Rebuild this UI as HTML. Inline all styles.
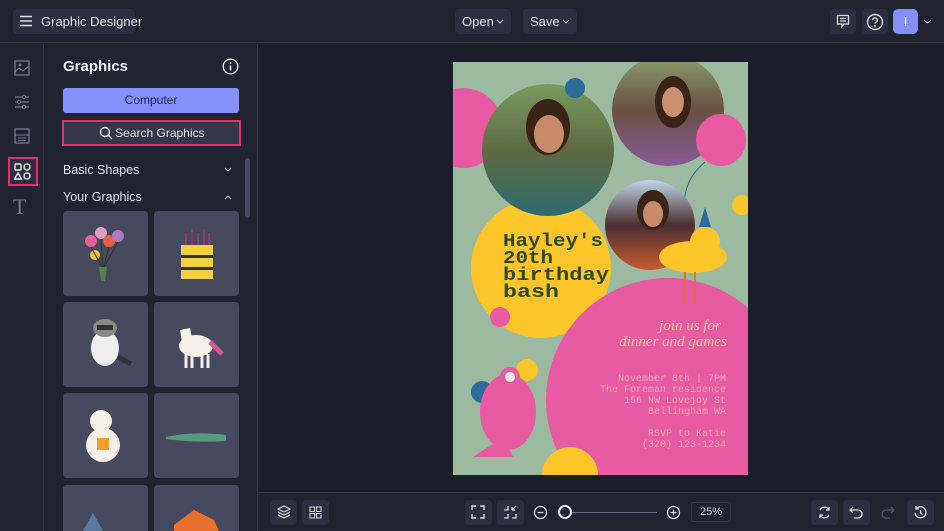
<!DOCTYPE html>
<html style="width:944px;height:531px;overflow:hidden"><head><style>
*{box-sizing:border-box;margin:0;padding:0}
body{width:944px;height:531px;background:#1b1d28;font-family:"Liberation Sans",sans-serif;color:#e4e5ec;position:relative;overflow:hidden;font-size:13px}
.abs{position:absolute}
.btn{position:absolute;background:#2c2f3e;border-radius:4px}
.tile{position:absolute;width:85px;height:85px;background:#474a5e;border-radius:4px}
svg{position:absolute}
</style></head><body>
<div class="abs" style="left:0;top:0;width:944px;height:43px;background:#21232f;border-bottom:1px solid #363848"></div>
<div class="btn" style="left:13px;top:9px;width:122px;height:25px"></div>
<svg style="left:19px;top:15px" width="14" height="12"><path d="M1 1.5H13M1 6H13M1 10.5H13" stroke="#dfe0e8" stroke-width="1.5"/></svg>
<div class="abs" style="left:41px;top:14px;font-size:13px">Graphic Designer</div>
<div class="btn" style="left:455px;top:9px;width:56px;height:25px"></div>
<div class="abs" style="left:462px;top:14px">Open</div>
<svg style="left:496px;top:19px" width="8" height="6"><path d="M1 1L4 4L7 1" stroke="#ccc" fill="none"/></svg>
<div class="btn" style="left:523px;top:9px;width:54px;height:25px"></div>
<div class="abs" style="left:530px;top:14px">Save</div>
<svg style="left:562px;top:19px" width="8" height="6"><path d="M1 1L4 4L7 1" stroke="#ccc" fill="none"/></svg>
<div class="btn" style="left:830px;top:9px;width:26px;height:25px"></div>
<svg style="left:836px;top:14px" width="14" height="15"><path d="M1.5 1.5H12.5V10H8L6 12.5V10H1.5Z M4 4.5H10M4 7H10" stroke="#ddd" fill="none" stroke-width="1.3"/></svg>
<div class="btn" style="left:862px;top:9px;width:26px;height:25px"></div>
<svg style="left:866px;top:13px" width="18" height="18"><circle cx="9" cy="9" r="7.5" stroke="#ddd" fill="none" stroke-width="1.4"/><path d="M6.8 7.2A2.2 2.2 0 1 1 9.8 9.2C9.2 9.6 9 10 9 10.8" stroke="#ddd" fill="none" stroke-width="1.4"/><circle cx="9" cy="13" r=".9" fill="#ddd"/></svg>
<div class="abs" style="left:893px;top:9px;width:25px;height:25px;background:#8490fb;border-radius:5px;color:#fff;text-align:center;line-height:25px">I</div>
<svg style="left:923px;top:19px" width="9" height="6"><path d="M1 1L4.5 4L8 1" stroke="#ccc" fill="none"/></svg>

<div class="abs" style="left:0;top:44px;width:44px;height:487px;background:#21232f;border-right:1px solid #363848"></div>
<svg style="left:14px;top:60px" width="16" height="16"><rect x="1" y="1" width="14" height="14" stroke="#777a8c" fill="none" stroke-width="1.3"/><path d="M1 12L5 8L9 11L15 6" stroke="#777a8c" fill="none"/><circle cx="6" cy="5" r="1.4" fill="#777a8c"/></svg>
<svg style="left:14px;top:94px" width="16" height="16"><path d="M1 3H15M1 8H15M1 13H15" stroke="#777a8c" stroke-width="1.2"/><circle cx="10" cy="3" r="1.7" fill="#21232f" stroke="#777a8c"/><circle cx="5" cy="8" r="1.7" fill="#21232f" stroke="#777a8c"/><circle cx="10" cy="13" r="1.7" fill="#21232f" stroke="#777a8c"/></svg>
<svg style="left:14px;top:128px" width="16" height="16"><rect x="1" y="1" width="14" height="14" stroke="#777a8c" fill="none" stroke-width="1.3"/><path d="M1 7H15M4 10H12M4 12.5H12" stroke="#777a8c"/></svg>
<div class="abs" style="left:8px;top:157px;width:30px;height:29px;border:2px solid #e0336b;background:#2c2f3e"></div>
<svg style="left:14px;top:163px" width="18" height="18"><rect x="1" y="1" width="6" height="6" rx="1" stroke="#eee" fill="none" stroke-width="1.4"/><circle cx="13" cy="4" r="3" stroke="#eee" fill="none" stroke-width="1.4"/><path d="M4 10L7.5 16H0.5Z" stroke="#eee" fill="none" stroke-width="1.4"/><circle cx="13" cy="13" r="3" stroke="#eee" fill="none" stroke-width="1.4"/></svg>
<div class="abs" style="left:13px;top:194px;font-family:'Liberation Serif',serif;font-size:22px;color:#777a8c">T</div>

<div class="abs" style="left:45px;top:44px;width:213px;height:487px;background:#21232f;border-right:1px solid #363848;overflow:hidden">
</div>
<div class="abs" style="left:63px;top:58px;font-size:15px;font-weight:bold;color:#f2f2f6">Graphics</div>
<svg style="left:222px;top:58px" width="17" height="17"><circle cx="8.5" cy="8.5" r="7.3" stroke="#eee" fill="none" stroke-width="1.3"/><path d="M8.5 7.5V12.5" stroke="#eee" stroke-width="1.5"/><circle cx="8.5" cy="5" r=".9" fill="#eee"/></svg>
<div class="abs" style="left:63px;top:88px;width:176px;height:25px;background:#8490fb;border-radius:3px;color:#1f2240;text-align:center;line-height:25px;font-size:12px">Computer</div>
<div class="abs" style="left:62px;top:120px;width:179px;height:26px;border:2px solid #e0336b;background:#343747;text-align:center;line-height:22px;font-size:12px;color:#e8e8ee">&nbsp;&nbsp;&nbsp;&nbsp;&nbsp;Search Graphics</div>
<svg style="left:99px;top:126px" width="14" height="14"><circle cx="6" cy="6" r="4.5" stroke="#eee" fill="none" stroke-width="1.4"/><path d="M9.3 9.3L13 13" stroke="#eee" stroke-width="1.4"/></svg>
<div class="abs" style="left:63px;top:163px;font-size:12.5px">Basic Shapes</div>
<svg style="left:224px;top:167px" width="8" height="6"><path d="M1 1L4 4L7 1" stroke="#ccc" fill="none"/></svg>
<div class="abs" style="left:63px;top:190px;font-size:12.5px">Your Graphics</div>
<svg style="left:224px;top:194px" width="8" height="6"><path d="M1 5L4 2L7 5" stroke="#ccc" fill="none"/></svg>
<div class="abs" style="left:245px;top:158px;width:5px;height:60px;background:#474a5e;border-radius:3px"></div>
<div class="tile" style="left:63px;top:211px"></div><div class="tile" style="left:154px;top:211px"></div>
<div class="tile" style="left:63px;top:302px"></div><div class="tile" style="left:154px;top:302px"></div>
<div class="tile" style="left:63px;top:393px"></div><div class="tile" style="left:154px;top:393px"></div>
<div class="tile" style="left:63px;top:485px;height:46px;border-radius:4px 4px 0 0"></div><div class="tile" style="left:154px;top:485px;height:46px;border-radius:4px 4px 0 0"></div>
<svg style="left:63px;top:211px" width="85" height="85"><circle cx="28" cy="30" r="6" fill="#e85ca0"/><circle cx="38" cy="22" r="6" fill="#d9a0b8"/><circle cx="46" cy="30" r="6" fill="#e8604a"/><circle cx="55" cy="25" r="6" fill="#b07ac0"/><circle cx="32" cy="44" r="5" fill="#f1c232"/><path d="M28 36L40 58M38 28L40 58M46 36L40 58M55 31L40 58" stroke="#333"/><path d="M36 56L44 56L42 70L38 70Z" fill="#5a7a4a"/></svg>
<svg style="left:154px;top:211px" width="85" height="85"><rect x="27" y="34" width="32" height="34" fill="#f4d03f"/><rect x="27" y="44" width="32" height="3" fill="#333"/><rect x="27" y="56" width="32" height="3" fill="#333"/><path d="M32 22V34M38 18V34M44 22V34M50 18V34M55 22V34" stroke="#c36"/></svg>
<svg style="left:63px;top:302px" width="85" height="85"><ellipse cx="42" cy="46" rx="14" ry="18" fill="#eee"/><ellipse cx="42" cy="26" rx="12" ry="9" fill="#888"/><rect x="34" y="23" width="16" height="5" fill="#333"/><path d="M55 55L68 62" stroke="#333" stroke-width="5"/></svg>
<svg style="left:154px;top:302px" width="85" height="85"><ellipse cx="42" cy="44" rx="17" ry="11" fill="#f5f0e8"/><path d="M28 40L26 28L36 26L38 36" fill="#f5f0e8"/><path d="M56 40L68 52" stroke="#e05090" stroke-width="5"/><path d="M32 52V66M38 52V66M48 52V66M54 52V66" stroke="#f5f0e8" stroke-width="3"/></svg>
<svg style="left:63px;top:393px" width="85" height="85"><ellipse cx="40" cy="52" rx="17" ry="17" fill="#f5f0e8"/><circle cx="38" cy="28" r="11" fill="#f5f0e8"/><rect x="34" y="45" width="12" height="12" fill="#f1a030"/></svg>
<svg style="left:154px;top:393px" width="85" height="85"><path d="M12 44Q40 38 72 42L72 48Q40 50 12 46Z" fill="#5a9a80"/></svg>
<svg style="left:154px;top:485px" width="85" height="46"><path d="M20 40L40 25L60 35L65 46L20 46Z" fill="#e8702a"/></svg>
<svg style="left:63px;top:485px" width="85" height="46"><path d="M20 46L30 28L40 46Z" fill="#5a7aa0"/></svg>

<svg style="left:453px;top:62px" width="295" height="413" viewBox="0 0 295 413">
<defs><clipPath id="c"><rect width="295" height="413"/></clipPath>
<linearGradient id="g1" x1="0" y1="0" x2="0" y2="1"><stop offset="0" stop-color="#7a9a60"/><stop offset=".5" stop-color="#5e6a40"/><stop offset="1" stop-color="#2e6a70"/></linearGradient>
<linearGradient id="g2" x1="0" y1="0" x2="0" y2="1"><stop offset="0" stop-color="#8aa070"/><stop offset=".5" stop-color="#6a5040"/><stop offset="1" stop-color="#8a5a9a"/></linearGradient>
<linearGradient id="g3" x1="0" y1="0" x2="0" y2="1"><stop offset="0" stop-color="#c0d4e8"/><stop offset=".5" stop-color="#4a3030"/><stop offset="1" stop-color="#c85a30"/></linearGradient></defs>
<g clip-path="url(#c)">
<rect width="295" height="413" fill="#9cbaa0"/>
<circle cx="88" cy="206" r="70" fill="#fcc52a"/>
<circle cx="215" cy="338" r="122" fill="#e85aa2"/>
<circle cx="10" cy="66" r="40" fill="#e85aa2"/>
<circle cx="95" cy="88" r="66" fill="url(#g1)"/>
<ellipse cx="95" cy="65" rx="22" ry="28" fill="#3a2418"/><ellipse cx="96" cy="72" rx="15" ry="19" fill="#c88a6a"/>
<circle cx="122" cy="26" r="10" fill="#2e6a9a"/>
<circle cx="215" cy="48" r="56" fill="url(#g2)"/>
<ellipse cx="220" cy="40" rx="18" ry="26" fill="#3a2418"/><ellipse cx="220" cy="40" rx="11" ry="15" fill="#c89070"/>
<ellipse cx="268" cy="78" rx="25" ry="26" fill="#e85aa2"/>
<path d="M252 100Q228 120 232 150" stroke="#2e6a9a" fill="none"/>
<circle cx="197" cy="163" r="45" fill="url(#g3)"/>
<ellipse cx="200" cy="148" rx="16" ry="20" fill="#3a2418"/><ellipse cx="200" cy="152" rx="10" ry="13" fill="#c88a6a"/>
<ellipse cx="240" cy="195" rx="34" ry="16" fill="#fcc52a"/><ellipse cx="252" cy="180" rx="15" ry="15" fill="#fcc52a"/><path d="M246 165L252 145L258 165Z" fill="#2e6a9a"/>
<path d="M232 210V242M242 210V242" stroke="#e8702a" stroke-width="2"/>
<circle cx="289" cy="143" r="10" fill="#fcc52a"/>
<circle cx="47" cy="255" r="10" fill="#e85aa2"/>
<circle cx="74" cy="308" r="11" fill="#fcc52a"/>
<circle cx="117" cy="413" r="28" fill="#fcc52a"/>
<circle cx="29" cy="330" r="11" fill="#2e6a9a"/>
<ellipse cx="55" cy="350" rx="28" ry="38" fill="#e85aa2"/><circle cx="57" cy="315" r="10" fill="#e85aa2"/><circle cx="57" cy="315" r="5" fill="#f5f0e8"/>
<path d="M20 395L50 375L60 395Z" fill="#e85aa2"/>
<g font-family="Liberation Mono,monospace" font-weight="bold" font-size="18" fill="#2e4a20">
<text x="50" y="184" textLength="100" lengthAdjust="spacingAndGlyphs">Hayley's</text>
<text x="50" y="201" textLength="50" lengthAdjust="spacingAndGlyphs">20th</text>
<text x="50" y="218" textLength="106" lengthAdjust="spacingAndGlyphs">birthday</text>
<text x="50" y="235" textLength="56" lengthAdjust="spacingAndGlyphs">bash</text></g>
<text x="237" y="268" text-anchor="middle" font-family="Liberation Serif,serif" font-style="italic" font-size="15" fill="#f6c8a0">join us for</text>
<text x="220" y="284" text-anchor="middle" font-family="Liberation Serif,serif" font-style="italic" font-size="15" fill="#f6c8a0">dinner and games</text>
<g font-family="Liberation Mono,monospace" font-size="10" fill="#f6a8b0" text-anchor="end">
<text x="273" y="319">November 8th | 7PM</text>
<text x="273" y="330">The Foreman residence</text>
<text x="273" y="341">156 NW Lovejoy St</text>
<text x="273" y="352">Bellingham WA</text>
<text x="273" y="374">RSVP to Katie</text>
<text x="273" y="385">(320) 123-1234</text></g>
</g></svg>

<div class="abs" style="left:258px;top:492px;width:686px;height:39px;background:#21232f;border-top:1px solid #363848"></div>
<div class="btn" style="left:270px;top:500px;width:27px;height:25px"></div>
<svg style="left:277px;top:505px" width="14" height="14"><path d="M7 1L13 4L7 7L1 4Z M1 7L7 10L13 7 M1 10L7 13L13 10" stroke="#ddd" fill="none" stroke-width="1.2"/></svg>
<div class="btn" style="left:302px;top:500px;width:27px;height:25px"></div>
<svg style="left:309px;top:506px" width="13" height="13"><rect x="1" y="1" width="4.5" height="4.5" stroke="#ddd" fill="none"/><rect x="7.5" y="1" width="4.5" height="4.5" stroke="#ddd" fill="none"/><rect x="1" y="7.5" width="4.5" height="4.5" stroke="#ddd" fill="none"/><rect x="7.5" y="7.5" width="4.5" height="4.5" stroke="#ddd" fill="none"/></svg>
<div class="btn" style="left:465px;top:500px;width:27px;height:25px"></div>
<svg style="left:471px;top:505px" width="14" height="14"><path d="M1 5V1H5M9 1H13V5M13 9V13H9M5 13H1V9" stroke="#ddd" fill="none" stroke-width="1.4"/></svg>
<div class="btn" style="left:497px;top:500px;width:27px;height:25px"></div>
<svg style="left:503px;top:505px" width="14" height="14"><path d="M5 1V5H1M13 9V13H9M1 13H5V9M9 5L13 1M9 5V2M9 5H12" stroke="#ddd" fill="none" stroke-width="1.3"/></svg>
<svg style="left:533px;top:505px" width="15" height="15"><circle cx="7.5" cy="7.5" r="6" stroke="#ddd" fill="none" stroke-width="1.3"/><path d="M4.5 7.5H10.5" stroke="#ddd" stroke-width="1.3"/></svg>
<div class="abs" style="left:568px;top:512px;width:89px;height:1px;background:#6a6d80"></div>
<div class="abs" style="left:558px;top:505px;width:14px;height:14px;border:2px solid #eee;border-radius:50%;background:#21232f"></div>
<svg style="left:666px;top:505px" width="15" height="15"><circle cx="7.5" cy="7.5" r="6" stroke="#ddd" fill="none" stroke-width="1.3"/><path d="M4.5 7.5H10.5M7.5 4.5V10.5" stroke="#ddd" stroke-width="1.3"/></svg>
<div class="abs" style="left:691px;top:502px;width:40px;height:20px;border:1px solid #363848;border-radius:3px;font-size:11px;text-align:center;line-height:19px;color:#ddd">25%</div>
<div class="btn" style="left:811px;top:500px;width:27px;height:25px"></div>
<svg style="left:817px;top:505px" width="15" height="15"><path d="M12 5A5 5 0 0 0 3 5M3 10A5 5 0 0 0 12 10M12 2V5H9M3 13V10H6" stroke="#ddd" fill="none" stroke-width="1.3"/></svg>
<div class="btn" style="left:843px;top:500px;width:27px;height:25px"></div>
<svg style="left:849px;top:505px" width="15" height="14"><path d="M4 2L1 5L4 8M1 5H9A4 4 0 0 1 9 13H5" stroke="#ddd" fill="none" stroke-width="1.3"/></svg>
<svg style="left:880px;top:505px" width="15" height="14"><path d="M11 2L14 5L11 8M14 5H6A4 4 0 0 0 6 13H10" stroke="#555869" fill="none" stroke-width="1.3"/></svg>
<div class="btn" style="left:907px;top:500px;width:27px;height:25px"></div>
<svg style="left:913px;top:505px" width="15" height="15"><path d="M3 4A5.5 5.5 0 1 1 2 8M3 1V4H6M7.5 5V8L9.5 9.5" stroke="#ddd" fill="none" stroke-width="1.3"/></svg>
</body></html>
